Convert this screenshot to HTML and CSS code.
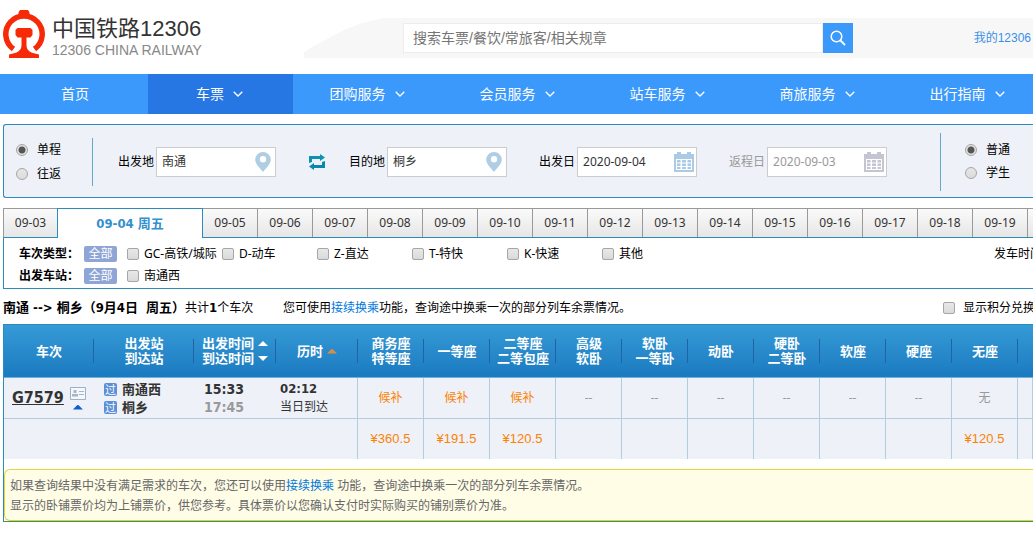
FILE: index.html
```html
<!DOCTYPE html>
<html lang="zh-CN">
<head>
<meta charset="utf-8">
<title>中国铁路12306</title>
<link rel="stylesheet" href="styles.css">
</head>
<body>
<svg class="defs" aria-hidden="true">
  <symbol id="chev" viewBox="0 0 10 6"><path d="M.7.7 5 5 9.300.7" fill="none" stroke="currentColor" stroke-width="1.3"/></symbol>
  <symbol id="pin" viewBox="0 0 16 20"><path fill-rule="evenodd" d="M8 0a7.800 7.800 0 0 1 7.800 7.800C15.800 12 11 16 8 20 5 16 .2 12 .2 7.800A7.800 7.800 0 0 1 8 0zm0 4a3.200 3.200 0 1 0 0 6.400A3.200 3.200 0 0 0 8 4z" fill="currentColor"/></symbol>
  <symbol id="cal" viewBox="0 0 20 20"><path fill="currentColor" d="M0 2h3V0h4v2h6V0h4v2h3v18H0z"/><path fill="#fff" d="M2 7h16v11H2z"/><path fill="currentColor" d="M3 8h3.500v2.500H3zM8 8h4v2.500H8zM13.500 8H17v2.500h-3.500zM3 11.500h3.500V14H3zM8 11.500h4V14H8zM13.500 11.500H17V14h-3.500zM3 15h3.500v2H3zM8 15h4v2H8zM13.500 15H17v2h-3.500z"/></symbol>
</svg>

<header class="header">
  <a class="logo" href="#">
    <svg class="logo-mark" viewBox="0 0 42 48" aria-hidden="true">
      <path d="M10.500 39A18.200 18.200 0 1 1 31.500 39" fill="none" stroke="#f72a08" stroke-width="5.500"/>
      <path fill="#f72a08" d="M17 0h8l1.500 2.500V7h-11V2.500zM14.500 18h13l2 2v5l-2 2.500h-4V35c0 4 2 6.500 6.500 8l6 1.500V48H6v-3.500l6-1.500c4.500-1.500 6.500-4 6.500-8v-7.500h-4l-2-2.500v-5z"/>
    </svg>
    <span class="logo-text"><span class="logo-name">中国铁路12306</span><span class="logo-sub">12306 CHINA RAILWAY</span></span>
  </a>
  <div class="band">
    <form class="search">
      <input class="search-input" type="text" aria-label="搜索" placeholder="搜索车票/餐饮/常旅客/相关规章">
      <button class="search-btn" type="button" aria-label="搜索"><svg width="16" height="16" viewBox="0 0 16 16"><circle cx="6.500" cy="6.500" r="5.300" fill="none" stroke="#fff" stroke-width="1.500"/><path d="m10.500 10.500 4.500 4.500" stroke="#fff" stroke-width="1.800"/></svg></button>
    </form>
    <a class="mine" href="#">我的12306</a>
  </div>
</header>

<nav class="nav">
  <a class="nav-item nav-home" href="#">首页</a>
  <a class="nav-item nav-on" href="#">车票<svg class="chev"><use href="#chev"/></svg></a>
  <a class="nav-item" href="#">团购服务<svg class="chev"><use href="#chev"/></svg></a>
  <a class="nav-item" href="#">会员服务<svg class="chev"><use href="#chev"/></svg></a>
  <a class="nav-item" href="#">站车服务<svg class="chev"><use href="#chev"/></svg></a>
  <a class="nav-item" href="#">商旅服务<svg class="chev"><use href="#chev"/></svg></a>
  <a class="nav-item" href="#">出行指南<svg class="chev"><use href="#chev"/></svg></a>
</nav>

<main class="main">
  <form class="query">
    <div class="radios trip">
      <label class="opt"><input class="radio" type="radio" name="trip" checked>单程</label>
      <label class="opt"><input class="radio" type="radio" name="trip">往返</label>
    </div>
    <div class="field"><label for="from">出发地</label><span class="box"><input id="from" type="text" value="南通"><svg class="pin"><use href="#pin"/></svg></span></div>
    <button class="swap" type="button" aria-label="交换"><svg width="18" height="16" viewBox="0 0 18 16"><path fill="#0b93b0" d="M1 2h11V0l5 3.500L12 7V5H4v3L1 9z"/><path fill="#0b86ac" d="M17 14H6v2l-5-3.500L6 9v2h8V8l3-1z"/></svg></button>
    <div class="field"><label for="to">目的地</label><span class="box"><input id="to" type="text" value="桐乡"><svg class="pin"><use href="#pin"/></svg></span></div>
    <div class="field date"><label for="go">出发日</label><span class="box"><input id="go" type="text" value="2020-09-04"><svg class="cal"><use href="#cal"/></svg></span></div>
    <div class="field date off"><label for="back">返程日</label><span class="box"><input id="back" type="text" value="2020-09-03"><svg class="cal"><use href="#cal"/></svg></span></div>
    <div class="radios kind">
      <label class="opt"><input class="radio" type="radio" name="kind" checked>普通</label>
      <label class="opt"><input class="radio" type="radio" name="kind">学生</label>
    </div>
  </form>

  <div class="tabs">
    <button class="tab" type="button">09-03</button>
    <button class="tab tab-on" type="button">09-04 周五</button>
    <button class="tab" type="button">09-05</button>
    <button class="tab" type="button">09-06</button>
    <button class="tab" type="button">09-07</button>
    <button class="tab" type="button">09-08</button>
    <button class="tab" type="button">09-09</button>
    <button class="tab" type="button">09-10</button>
    <button class="tab" type="button">09-11</button>
    <button class="tab" type="button">09-12</button>
    <button class="tab" type="button">09-13</button>
    <button class="tab" type="button">09-14</button>
    <button class="tab" type="button">09-15</button>
    <button class="tab" type="button">09-16</button>
    <button class="tab" type="button">09-17</button>
    <button class="tab" type="button">09-18</button>
    <button class="tab" type="button">09-19</button>
    <button class="tab" type="button" aria-label="09-20"></button>
  </div>

  <section class="filters">
    <div class="frow">
      <strong class="fname">车次类型：</strong><button class="all" type="button">全部</button>
      <label class="chk"><input class="check" type="checkbox">GC-高铁/城际</label>
      <label class="chk"><input class="check" type="checkbox">D-动车</label>
      <label class="chk"><input class="check" type="checkbox">Z-直达</label>
      <label class="chk"><input class="check" type="checkbox">T-特快</label>
      <label class="chk"><input class="check" type="checkbox">K-快速</label>
      <label class="chk"><input class="check" type="checkbox">其他</label>
      <span class="depart">发车时间：</span>
    </div>
    <div class="frow">
      <strong class="fname">出发车站：</strong><button class="all" type="button">全部</button>
      <label class="chk"><input class="check" type="checkbox">南通西</label>
    </div>
  </section>

  <div class="summary">
    <p class="count"><strong>南通 --&gt; 桐乡（9月4日&nbsp; 周五）</strong>共计<strong>1</strong>个车次</p>
    <p class="tip">您可使用<a href="#">接续换乘</a>功能，查询途中换乘一次的部分列车余票情况。</p>
    <label class="points"><input class="check" type="checkbox">显示积分兑换车次</label>
  </div>

  <section class="results">
    <table class="list">
      <colgroup><col class="c-train"><col class="c-station"><col class="c-time"><col class="c-time"><col class="c-seat" span="10"><col></colgroup>
      <thead>
        <tr>
          <th>车次</th>
          <th>出发站<br>到达站</th>
          <th><span class="sort">出发时间<i class="tri up"></i></span><span class="sort">到达时间<i class="tri down"></i></span></th>
          <th><span class="sort">历时<i class="tri up orange"></i></span></th>
          <th>商务座<br>特等座</th><th>一等座</th><th>二等座<br>二等包座</th><th>高级<br>软卧</th><th>软卧<br>一等卧</th><th>动卧</th><th>硬卧<br>二等卧</th><th>软座</th><th>硬座</th><th>无座</th><th></th>
        </tr>
      </thead>
      <tbody>
        <tr class="train">
          <td colspan="4">
            <div class="info">
              <div class="i-train"><a class="no" href="#">G7579</a><span class="marks"><svg width="16" height="13" viewBox="0 0 16 13"><path d="M.5.5h15v12H.5z" fill="#f4f7fb" stroke="#9bb3c9"/><path d="M3.500 3h3v3h-3zM2 7h6v2.500H2zM9 4h5v1H9zM9 7h5v1H9z" fill="#a9b6c2"/></svg><i class="tri up blue"></i></span></div>
              <div class="i-station"><span class="stop"><i class="pass">过</i>南通西</span><span class="stop"><i class="pass">过</i>桐乡</span></div>
              <div class="i-time"><span>15:33</span><span class="arr">17:45</span></div>
              <div class="i-dur"><strong>02:12</strong><span>当日到达</span></div>
            </div>
          </td>
          <td class="wait">候补</td><td class="wait">候补</td><td class="wait">候补</td><td>--</td><td>--</td><td>--</td><td>--</td><td>--</td><td>--</td><td>无</td><td></td>
        </tr>
        <tr class="price">
          <td colspan="4"></td>
          <td>¥360.5</td><td>¥191.5</td><td>¥120.5</td><td></td><td></td><td></td><td></td><td></td><td></td><td>¥120.5</td><td></td>
        </tr>
      </tbody>
    </table>
    <div class="notice">
      <p>如果查询结果中没有满足需求的车次，您还可以使用<a href="#">接续换乘</a> 功能，查询途中换乘一次的部分列车余票情况。</p>
      <p>显示的卧铺票价均为上铺票价，供您参考。具体票价以您确认支付时实际购买的铺别票价为准。</p>
    </div>
  </section>
</main>
</body>
</html>
```
FILE: styles.css
```css
* { box-sizing: border-box; }
body { margin: 0; background: #fff; color: #000; font: 12px/18px "Noto Sans", "Noto Sans CJK SC", sans-serif; overflow-x: hidden; }
p { margin: 0; }
a { text-decoration: none; color: #0077dd; }
input, button { font: inherit; color: inherit; margin: 0; padding: 0; }
button { border: 0; background: none; cursor: pointer; }
.defs { display: none; }

.header { display: flex; height: 74px; font-family: "Liberation Sans", "Noto Sans CJK SC", sans-serif; }
.logo { display: flex; flex: none; width: 304px; padding: 10px 0 0 3px; color: #333; }
.logo-mark { width: 42px; height: 48px; }
.logo-text { display: flex; flex-direction: column; padding: 5px 0 0 7px; }
.logo-name { font-size: 22px; line-height: 28px; }
.logo-sub { font-size: 14px; line-height: 14px; color: #888; white-space: nowrap; }
.band { display: flex; flex: 1; align-items: center; height: 40px; margin-top: 18px; padding-left: 99px; background: #f7f7f7; clip-path: polygon(0 100%, 0 34px, 10px 28px, 40px 12px, 58px 5px, 80px 0, 100% 0, 100% 100%); }
.search { display: flex; flex: none; width: 450px; }
.search-input { flex: 1; min-width: 0; height: 30px; padding: 0 9px; border: 1px solid #ededed; background: #fff; font-size: 14px; }
.search-input::placeholder { color: #757575; opacity: 1; }
.search-btn { display: flex; align-items: center; justify-content: center; width: 30px; height: 30px; background: #3b99fc; }
.mine { margin: 0 2px 0 auto; color: #3b8fe8; white-space: nowrap; }

.nav { display: flex; height: 40px; overflow: hidden; background: #3b99fc; font-size: 14px; }
.nav-item { display: flex; flex: none; align-items: center; justify-content: center; gap: 9px; width: 150px; padding-right: 2px; color: #fff; }
.nav-home { width: 148px; padding: 0 0 0 2px; }
.nav-on { width: 145px; background: #2676e3; }
.chev { width: 10px; height: 6px; }

.main { padding: 10px 0 0 3px; overflow: hidden; }
.query { display: flex; align-items: center; height: 74px; padding-top: 2px; border: 1px solid #298cba; border-right: 0; border-radius: 3px 0 0 3px; background: #eef1f8; white-space: nowrap; }
.radios { display: flex; flex: none; flex-direction: column; justify-content: center; }
.trip { gap: 6px; width: 89px; height: 48px; padding-left: 12px; border-right: 1px solid #62a9cc; }
.kind { gap: 5px; height: 58px; margin-left: 53px; padding: 0 0 2px 24px; border-left: 1px solid #62a9cc; }
.opt { display: flex; align-items: center; gap: 9px; }
.radio { appearance: none; width: 12px; height: 12px; border: 1px solid #a5a5a5; border-radius: 50%; background: linear-gradient(#e6e6e6, #dcdcdc); }
.radio:checked { background: radial-gradient(circle, #555 0 3px, #e2e2e2 4px); }
.field { display: flex; flex: none; align-items: center; gap: 2px; margin-left: 25px; }
.box { display: flex; align-items: center; width: 120px; height: 30px; padding: 0 4px 0 5px; border: 1px solid #ccc; background: #fff; color: #333; }
.box input { flex: 1; min-width: 0; border: 0; background: none; outline: 0; }
.pin { width: 16px; height: 20px; color: #afcde3; }
.cal { width: 20px; height: 20px; color: #a9cbe6; }
.box:has(.cal) { padding-right: 2px; }
.swap { display: flex; flex: none; width: 18px; margin-left: 32px; }
.swap + .field { margin-left: 23px; }
.date { margin-left: 32px; }
.off, .off .box { color: #999; }
.off .cal { color: #c4c4d2; }

.tabs { display: flex; height: 30px; margin-top: 10px; border-bottom: 1px solid #298cba; border-left: 1px solid #999; }
.tab { flex: none; width: 55px; height: 29px; border-top: 1px solid #999; border-right: 1px solid #999; background: linear-gradient(#fafafa, #e6e6e6); color: #333; }
.tab:first-child { width: 53px; border-right: 0; }
.tab-on { width: 146px; height: 30px; border: 1px solid #298cba; border-bottom: 0; background: #fff; color: #3390cc; font: bold 13px/18px "DejaVu Sans Condensed", "Noto Sans CJK SC", sans-serif; }

.filters { height: 51px; padding: 5px 0 0 15px; border-left: 1px solid #298cba; border-bottom: 1px solid #298cba; }
.frow { display: flex; align-items: center; height: 22px; white-space: nowrap; }
.fname { width: 65px; }
.all { width: 33px; height: 16px; margin-right: 10px; border-radius: 2px; background: #8fa5d6; color: #fff; line-height: 16px; }
.chk { display: flex; flex: none; align-items: center; gap: 5px; width: 95px; }
.check { appearance: none; flex: none; width: 12px; height: 12px; border: 1px solid #a6a6a6; border-radius: 2px; background: linear-gradient(#e8e8e8, #dadada); }
.depart { margin: 0 -21px 0 auto; }

.summary { display: flex; align-items: center; height: 35px; padding-top: 2px; white-space: nowrap; }
.count { flex: none; width: 250px; }
.count strong { font: bold 13px/18px "DejaVu Sans Condensed", "Noto Sans CJK SC", sans-serif; }
.tip { margin-left: 30px; }
.points { display: flex; align-items: center; gap: 8px; margin: 0 -26px 0 auto; }

.results { border-left: 1px solid #298cba; border-bottom: 1px solid #5b8c3e; }
.list { width: 100%; table-layout: fixed; border-collapse: separate; border-spacing: 0; }
.c-train { width: 90px; }
.c-station { width: 100px; }
.c-time { width: 82px; }
.c-seat { width: 66px; }
.list thead { background: linear-gradient(#369bd7, #1a79bf); }
.list th { height: 54px; padding: 0; border-top: 1px solid #298cba; border-bottom: 1px solid #6fb0dc; background: linear-gradient(#2462a5, #2462a5) right center / 1px 24px no-repeat; color: #fff; font-size: 13px; line-height: 15px; white-space: nowrap; }
.list th:last-child { background: none; }
.sort { display: flex; align-items: center; justify-content: center; gap: 4px; }
.tri { width: 10px; height: 5px; background: #fff; }
.up { clip-path: polygon(50% 0, 100% 100%, 0 100%); }
.down { clip-path: polygon(0 0, 100% 0, 50% 100%); }
.orange { background: #d98c45; }
.blue { background: #0a5fd0; }
.list td { padding: 0; border-right: 1px solid #b0cedd; background: #eef1f8; color: #999; text-align: center; }
.train td { height: 41px; border-bottom: 1px solid #b0cedd; }
.list .wait { color: #fc8302; }
.price td { height: 40px; color: #fc8302; font: 13px/18px "Liberation Sans", sans-serif; }
.info { display: flex; color: #333; text-align: left; }
.i-train { display: flex; align-items: center; gap: 6px; width: 100px; padding-left: 8px; }
.no { color: #333; font: bold 16px/20px "DejaVu Sans Condensed", sans-serif; text-decoration: underline; }
.marks { display: flex; flex-direction: column; align-items: center; gap: 5px; }
.i-station, .i-time, .i-dur { display: flex; flex-direction: column; }
.i-station { width: 100px; font-size: 13px; font-weight: bold; }
.stop { display: flex; align-items: center; gap: 5px; }
.pass { width: 13px; height: 13px; border-radius: 2px; background: #5b8fd6; color: #fff; font: normal 11px/13px "Noto Sans CJK SC", sans-serif; text-align: center; }
.i-time { width: 76px; font: bold 14px/18px "DejaVu Sans Condensed", sans-serif; }
.arr { color: #999; }
.i-dur strong { font: bold 13px/18px "DejaVu Sans Condensed", sans-serif; }

.notice { margin-top: 10px; padding: 6px 5px 4px; border: 1px solid #e6d73c; border-right: 0; border-bottom-color: #b5dc6a; border-radius: 6px 0 0 6px; background: #fffde6; color: #666; line-height: 20px; }
```
